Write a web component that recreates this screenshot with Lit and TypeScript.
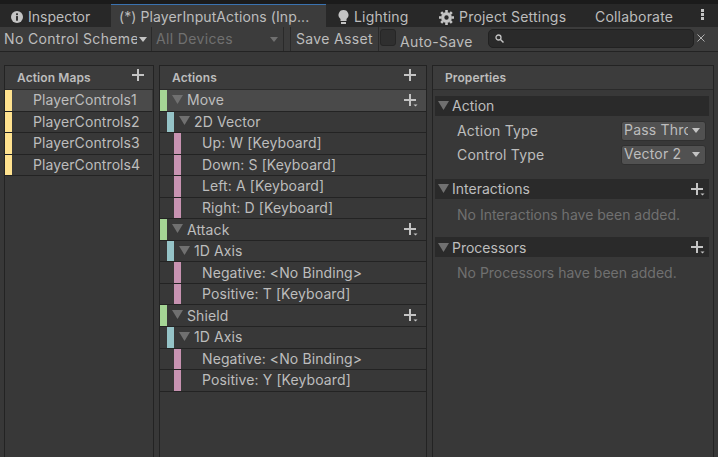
import { LitElement, html, css, nothing } from 'lit';
import { customElement } from 'lit/decorators.js';

type Row = { label: string; kind: 'action' | 'comp' | 'bind'; selected?: boolean };

const maps = ['PlayerControls1', 'PlayerControls2', 'PlayerControls3', 'PlayerControls4'];

const actions: Row[] = [
  { label: 'Move', kind: 'action', selected: true },
  { label: '2D Vector', kind: 'comp' },
  { label: 'Up: W [Keyboard]', kind: 'bind' },
  { label: 'Down: S [Keyboard]', kind: 'bind' },
  { label: 'Left: A [Keyboard]', kind: 'bind' },
  { label: 'Right: D [Keyboard]', kind: 'bind' },
  { label: 'Attack', kind: 'action' },
  { label: '1D Axis', kind: 'comp' },
  { label: 'Negative: <No Binding>', kind: 'bind' },
  { label: 'Positive: T [Keyboard]', kind: 'bind' },
  { label: 'Shield', kind: 'action' },
  { label: '1D Axis', kind: 'comp' },
  { label: 'Negative: <No Binding>', kind: 'bind' },
  { label: 'Positive: Y [Keyboard]', kind: 'bind' },
];

const plus = html`<svg class="plus" width="12" height="12" viewBox="0 0 12 12"><path d="M5 0h2v5h5v2H7v5H5V7H0V5h5z" fill="#c4c4c4"/></svg>`;
const plusMore = html`<svg class="plusmore" width="15" height="14" viewBox="0 0 15 14"><path d="M5 0h2v5h5v2H7v5H5V7H0V5h5z" fill="#c4c4c4"/><path d="M9.500 10.500h4l-2 2z" fill="#c4c4c4"/></svg>`;
const fold = html`<svg class="fold" width="11" height="9" viewBox="0 0 11 9"><path d="M0 0h11L5.500 9z" fill="#707070"/></svg>`;
const caret = html`<svg class="caret" width="8" height="5" viewBox="0 0 8 5"><path d="M0 0h8L4 5z" fill="#c4c4c4"/></svg>`;

@customElement('app-root')
export class AppRoot extends LitElement {
  static styles = css`
    :host {
      display: block;
      width: 718px;
      height: 457px;
      overflow: hidden;
      background: #383838;
      color: #bdbdbd;
      font: 14px/1 Inter, "Noto Sans", sans-serif;
      letter-spacing: 0.1px;
    }
    .tabs {
      display: flex;
      height: 27px;
      box-sizing: border-box;
      background: #282828;
      border-top: 4px solid #1b1b1b;
      align-items: stretch;
    }
    .tab {
      display: flex;
      align-items: center;
      gap: 5px;
      padding-top: 3px;
      box-sizing: border-box;
      white-space: nowrap;
    }
    .tab.inspector { width: 111px; padding-left: 11px; letter-spacing: 0; }
    .tab.active {
      width: 215px;
      padding-left: 8px;
      background: #3c3c3c;
      border-top: 1px solid #3a72b0;
      padding-top: 2px;
    }
    .tab.lighting { width: 100px; padding-left: 12px; letter-spacing: 0.2px; }
    .tab.settings { width: 156px; padding-left: 13px; letter-spacing: 0.2px; }
    .tab.collab { width: 119px; padding-left: 13px; letter-spacing: 0.2px; }
    .dots { display: flex; flex-direction: column; gap: 1px; margin: 5px 0 0 0; }
    .dots i { width: 3px; height: 3px; background: #c4c4c4; display: block; }
    .toolbar {
      display: flex;
      align-items: center;
      height: 25px;
      box-sizing: border-box;
      background: #3c3c3c;
      border-bottom: 1px solid #232323;
      letter-spacing: 0.35px;
    }
    .tool {
      display: flex;
      align-items: center;
      height: 24px;
      box-sizing: border-box;
      border-right: 1px solid #2a2a2a;
      white-space: nowrap;
      overflow: hidden;
    }
    .scheme { width: 152px; padding-left: 4px; }
    .scheme span { width: 133px; overflow: hidden; flex: none; }
    .scheme .caret { margin-left: 2px; flex: none; }
    .devices { width: 132px; padding-left: 4px; color: #707070; justify-content: space-between; padding-right: 5px; margin-right: 6px; }
    .devices .caret path { fill: #707070; }
    .save { width: 89px; padding-left: 5px; border-left: 1px solid #2a2a2a; }
    .check {
      width: 16px;
      height: 17px;
      box-sizing: border-box;
      margin-left: 1px;
      margin-top: -3px;
      background: #2f2f2f;
      border: 1px solid #262626;
      border-radius: 3px;
      flex: none;
    }
    .autosave { margin-left: 4px; padding-top: 6px; width: 88px; flex: none; }
    .search {
      width: 206px;
      height: 19px;
      box-sizing: border-box;
      margin-top: -1px;
      padding-left: 6px;
      display: flex;
      align-items: center;
      background: #2a2a2a;
      border: 1px solid #212121;
      border-radius: 5px;
      flex: none;
    }
    .clear { margin: -2px 0 0 3px; display: block; }
    .panes {
      display: flex;
      gap: 5px;
      padding: 13px 4px 0;
    }
    .pane {
      height: 393px;
      box-sizing: border-box;
      border: 1px solid #232323;
      border-bottom: 0;
      background: #383838;
    }
    .pane.maps { width: 150px; }
    .pane.acts { width: 268px; }
    .pane.props { width: 282px; }
    .head {
      display: flex;
      align-items: center;
      justify-content: space-between;
      height: 24.02px;
      box-sizing: border-box;
      padding: 0 10px 0 12px;
      background: #3c3c3c;
      border-bottom: 1px solid #2a2a2a;
      font-size: 12px;
      font-weight: 600;
      letter-spacing: 0.1px;
    }
    .maps .head { padding-right: 9px; }
    .head .plus { margin-top: -6px; }
    .row {
      display: flex;
      align-items: center;
      height: 21.56px;
      box-sizing: border-box;
      border-bottom: 1px solid #232323;
      position: relative;
      white-space: nowrap;
    }
    .row.selected { background: #4a4a4a; }
    .bar { align-self: stretch; width: 7px; flex: none; }
    .bar.map { background: #ffe28f; }
    .bar.action { background: #a5d595; }
    .bar.comp { background: #95c3c7; margin-left: 7px; }
    .bar.bind { background: #c792b1; margin-left: 14px; }
    .maps .row { margin-right: 1px; }
    .maps .row .label { margin-left: 21px; }
    .row .fold { flex: none; margin: -2px 4px 0 5px; }
    .row.bind .label { margin-left: 21px; }
    .row .plusmore { position: absolute; right: 7px; top: 4px; }
    .section {
      display: flex;
      align-items: center;
      height: 20px;
      margin: 0 4px 0 2px;
      box-sizing: border-box;
      background: #2a2a2a;
      position: relative;
      letter-spacing: 0;
    }
    .section .fold { margin: -2px 3px 0 3px; flex: none; }
    .section .plusmore { position: absolute; right: 3px; top: 4px; }
    .section-action { margin-top: 6px; }
    .section-inter { margin-top: 12px; }
    .section-proc { margin-top: 15px; padding-top: 2px; }
    .field {
      display: flex;
      align-items: center;
      justify-content: space-between;
      height: 24px;
      padding: 0 7px 0 24px;
      letter-spacing: 0.2px;
    }
    .dropdown {
      display: flex;
      align-items: center;
      justify-content: space-between;
      width: 85px;
      height: 20px;
      box-sizing: border-box;
      padding: 0 5px 2px 2px;
      background: #515151;
      border: 1px solid #303030;
      border-radius: 3px;
      white-space: nowrap;
    }
    .dropdown span { width: 64px; overflow: hidden; flex: none; }
    .empty { padding: 9px 0 0 24px; color: #707070; white-space: nowrap; letter-spacing: 0; }
    .action-fields { padding-top: 3px; }
  `;

  renderRow(r: Row) {
    return html`<div class="row ${r.kind} ${r.selected ? 'selected' : ''}">
      <span class="bar ${r.kind}"></span>
      ${r.kind === 'bind' ? nothing : fold}
      <span class="label">${r.label}</span>
      ${r.kind === 'action' ? plusMore : nothing}
    </div>`;
  }

  render() {
    return html`
      <div class="tabs">
        <div class="tab inspector">
          <svg width="12" height="12" viewBox="0 0 13 13"><circle cx="6.500" cy="6.500" r="6.500" fill="#c4c4c4"/><rect x="5.500" y="2.500" width="2" height="2" fill="#282828"/><rect x="5.500" y="5.500" width="2" height="5" fill="#282828"/></svg>
          <span>Inspector</span>
        </div>
        <div class="tab active">(*) PlayerInputActions (Inp...</div>
        <div class="tab lighting">
          <svg width="11" height="14" viewBox="0 0 11 14"><path d="M5.500 0a5 5 0 0 1 3 9v2h-6V9a5 5 0 0 1 3-9z" fill="#c4c4c4"/><rect x="3" y="12" width="5" height="2" fill="#c4c4c4"/></svg>
          <span>Lighting</span>
        </div>
        <div class="tab settings">
          <svg width="15" height="15" viewBox="0 0 15 15"><circle cx="7.500" cy="7.500" r="3.800" fill="none" stroke="#c4c4c4" stroke-width="3.200"/><path d="M7.500 0v15M0 7.500h15M2.200 2.200l10.600 10.600M12.800 2.200 2.200 12.800" stroke="#c4c4c4" stroke-width="2.600" stroke-dasharray="2.500 10"/></svg>
          <span>Project Settings</span>
        </div>
        <div class="tab collab">Collaborate</div>
        <div class="dots"><i></i><i></i><i></i></div>
      </div>
      <div class="toolbar">
        <div class="tool scheme"><span>No Control Schemes</span>${caret}</div>
        <div class="tool devices"><span>All Devices</span>${caret}</div>
        <div class="tool save">Save Asset</div>
        <div class="check"></div>
        <div class="autosave">Auto-Save</div>
        <div class="search">
          <svg width="9" height="9" viewBox="0 0 9 9"><circle cx="3.500" cy="3.500" r="2.500" fill="none" stroke="#c4c4c4" stroke-width="1.300"/><path d="M5.500 5.500 8.500 8.500" stroke="#c4c4c4" stroke-width="1.500"/></svg>
        </div>
        <svg class="clear" width="8" height="8" viewBox="0 0 8 8"><path d="M.5.500l7 7M7.500.500l-7 7" stroke="#b0b0b0" stroke-width="1"/></svg>
      </div>
      <div class="panes">
        <div class="pane maps">
          <div class="head"><span>Action Maps</span>${plus}</div>
          ${maps.map(
            (m, i) => html`<div class="row ${i === 0 ? 'selected' : ''}">
              <span class="bar map"></span><span class="label">${m}</span>
            </div>`
          )}
        </div>
        <div class="pane acts">
          <div class="head"><span>Actions</span>${plus}</div>
          ${actions.map((r) => this.renderRow(r))}
        </div>
        <div class="pane props">
          <div class="head"><span>Properties</span></div>
          <div class="section section-action">${fold}<span>Action</span></div>
          <div class="action-fields">
            <div class="field"><span>Action Type</span><div class="dropdown"><span>Pass Through</span>${caret}</div></div>
            <div class="field"><span>Control Type</span><div class="dropdown"><span>Vector 2</span>${caret}</div></div>
          </div>
          <div class="section section-inter">${fold}<span>Interactions</span>${plusMore}</div>
          <div class="empty">No Interactions have been added.</div>
          <div class="section section-proc">${fold}<span>Processors</span>${plusMore}</div>
          <div class="empty">No Processors have been added.</div>
        </div>
      </div>
    `;
  }
}
